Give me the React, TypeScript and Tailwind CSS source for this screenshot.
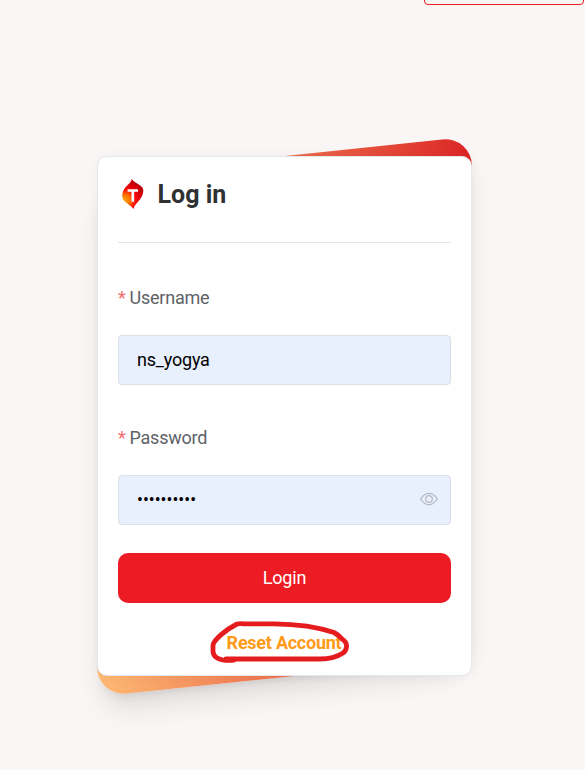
import React from 'react';

function FlameLogo() {
  return (
    <svg width="22" height="30" viewBox="0 0 22 30" className="block">
      <defs>
        <radialGradient id="flame" gradientUnits="userSpaceOnUse" cx="3" cy="21" r="20">
          <stop offset="0" stopColor="#ffa500" />
          <stop offset="0.28" stopColor="#ff6a00" />
          <stop offset="0.52" stopColor="#fb0d08" />
          <stop offset="0.75" stopColor="#e00008" />
          <stop offset="1" stopColor="#bd0008" />
        </radialGradient>
      </defs>
      <path
        d="M9.7 0C11.5 2.4 14.5 4 17.5 6C20 7.7 21.3 9 21.3 11.5C21.3 16.5 18.5 20 15.8 23C13.7 25.3 12 27 11.6 30C9.5 27.3 6.5 25.4 3.5 23C1.3 21.2 0.3 19.5 0.3 16.5C0.3 12 3 8.5 5.7 6C8 3.8 9.5 2.3 9.7 0Z"
        fill="url(#flame)"
      />
      <path d="M5.6 11.5H16M10.8 11.5V22.8" stroke="white" strokeWidth="2.7" />
    </svg>
  );
}

function EyeIcon() {
  return (
    <svg viewBox="0 0 1024 1024" className="mb-[2px] block size-[18px] fill-[#b6bac3]">
      <path d="M512 160c320 0 512 352 512 352S832 864 512 864 0 512 0 512s192-352 512-352m0 64c-225.28 0-384.128 208.064-436.8 288 52.608 79.872 211.456 288 436.8 288 225.28 0 384.128-208.064 436.8-288-52.608-79.872-211.456-288-436.8-288m0 64a224 224 0 1 1 0 448 224 224 0 0 1 0-448m0 64a160.192 160.192 0 0 0-160 160c0 88.192 71.744 160 160 160s160-71.808 160-160-71.744-160-160-160" />
    </svg>
  );
}

function Label({ children }: { children: React.ReactNode }) {
  return (
    <div className="flex h-[50px] items-center gap-1 text-lg tracking-[-0.23px] text-[#606266]">
      <span className="text-[#f56c6c]">*</span>
      <span>{children}</span>
    </div>
  );
}

const inputBox =
  'mt-3 flex h-[50px] items-center justify-between rounded border border-[#dcdfe6] bg-[#e8effd] pr-3 pl-[18px] text-lg tracking-[-0.2px] text-black';

export default function App() {
  return (
    <div className="relative h-[770px] w-[585px] overflow-hidden bg-[#faf6f5] pt-[156px] pl-[97px] font-['Roboto',sans-serif]">
      <div className="absolute -top-[35px] left-[424px] h-10 w-40 rounded border border-[#ed1c24]" />
      <div className="relative h-[520px] w-[375px]">
        <div className="absolute inset-x-0 top-0 -bottom-px -skew-y-6 rounded-[30px] bg-linear-to-r/srgb from-[#fdba74] to-[#dc2626] shadow-xl" />
        <div className="relative h-full rounded-[10px] border border-[#e4e7ed] bg-white px-5 shadow-[0_0_12px_rgba(0,0,0,0.04)]">
          <div className="flex h-[86px] items-center gap-[14px] border-b border-[#e4e4e7] pb-[9px] pl-[3.5px]">
            <div className="-mt-[2px]">
              <FlameLogo />
            </div>
            <h1 className="text-[25px] font-bold text-[#303133]">Log in</h1>
          </div>
          <form className="pt-[30px]">
            <Label>Username</Label>
            <div className={inputBox}>ns_yogya</div>
            <div className="h-7" />
            <Label>Password</Label>
            <div className={inputBox}>
              <span className="text-[17.5px] leading-[26px] tracking-normal">••••••••••</span>
              <EyeIcon />
            </div>
            <button
              type="button"
              className="mt-7 block h-[50px] w-full rounded-[10px] bg-[#ed1c24] text-lg tracking-[-0.2px] text-white"
            >
              Login
            </button>
          </form>
          <div className="mt-[26px] flex justify-center pr-px text-lg leading-7 font-bold tracking-[-0.25px] text-[#ff9a16]">
            Reset Account
          </div>
        </div>
        <svg
          viewBox="0 0 150 50"
          className="absolute top-[459px] left-[108px] h-[50px] w-[150px]"
          fill="none"
          stroke="#e51c1e"
          strokeWidth="4.8"
          strokeLinecap="round"
          strokeLinejoin="round"
        >
          <path d="M29 45.2C14 46.5 8 42 8 36V30C9 25 20 15 32 9Q34 8.5 39 8.8H69C91 9 113 12 129 17.5C133 19.5 135 22 139 25.5C143 29 142 35 138 38C132 42 124 44 115 44H21" />
        </svg>
      </div>
    </div>
  );
}
